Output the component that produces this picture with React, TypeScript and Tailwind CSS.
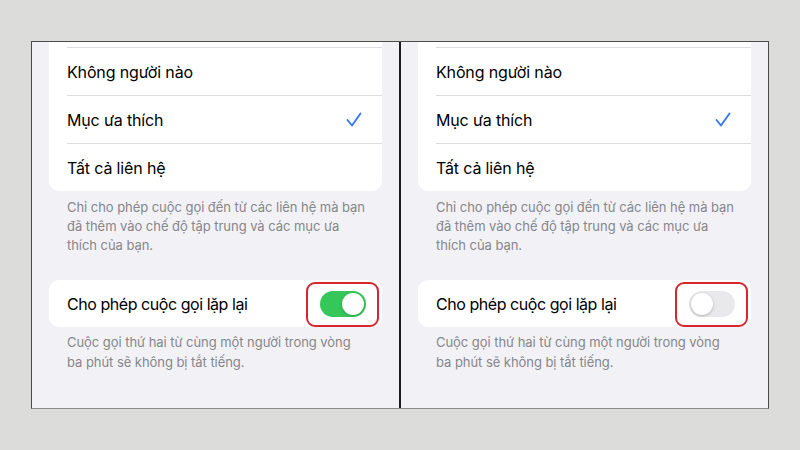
const font = { fontFamily: "Inter, 'Noto Sans', sans-serif" };

function Toggle({ on }: { on: boolean }) {
  return (
    <div className="relative">
      {/* red annotation box */}
      <div className="absolute -left-[14px] -top-[9px] w-[73px] h-[45px] rounded-[9px] border-2 border-[#d4272e]" />
      {on ? (
        <div className="w-[46px] h-[26px] rounded-full bg-[#35c759] flex items-center justify-end px-[2px]">
          <div className="w-[22px] h-[22px] rounded-full bg-white shadow-[0_1px_3px_rgba(0,0,0,0.2)]" />
        </div>
      ) : (
        <div className="w-[46px] h-[26px] rounded-full bg-[#e9e9eb] flex items-center justify-start px-[2px]">
          <div className="w-[22px] h-[22px] rounded-full bg-white shadow-[0_1px_3px_rgba(0,0,0,0.25)]" />
        </div>
      )}
    </div>
  );
}

function Tick() {
  return (
    <svg width="16" height="15" viewBox="0 0 16 15" fill="none">
      <polyline points="1.5,8 6,13.5 14.5,1.5" stroke="#3478f6" strokeWidth="1.9" strokeLinecap="round" strokeLinejoin="round" />
    </svg>
  );
}

function Panel({ on }: { on: boolean }) {
  const rows = ["Không người nào", "Mục ưa thích", "Tất cả liên hệ"];
  return (
    <div className="flex-1 h-full overflow-hidden bg-[#f2f2f6] px-[17px]" style={font}>
      {/* contacts card, top cut off by the screenshot */}
      <div className="bg-white rounded-b-[10px] pt-[5px]">
        {rows.map((r, i) => (
          <div key={r} className="pl-[18px]">
            <div className="h-[48px] border-t border-[#dcdce0] flex items-center justify-between pr-[20px]">
              <span className="text-[16px] text-black tracking-[-0.15px]">{r}</span>
              {i === 1 && <Tick />}
            </div>
          </div>
        ))}
      </div>
      <p className="mt-[7px] pl-[18px] text-[13px] leading-[19px] text-[#86868b] tracking-[-0.05px] whitespace-nowrap">
        Chỉ cho phép cuộc gọi đến từ các liên hệ mà bạn
        <br />
        đã thêm vào chế độ tập trung và các mục ưa
        <br />
        thích của bạn.
      </p>

      {/* repeated calls card */}
      <div className="mt-[25px] bg-white rounded-[10px] h-[47px] pl-[18px] pr-[16px] flex items-center justify-between">
        <span className="text-[16px] text-black tracking-[-0.45px]">Cho phép cuộc gọi lặp lại</span>
        <Toggle on={on} />
      </div>
      <p className="mt-[5px] pl-[18px] text-[13px] leading-[20px] text-[#86868b] tracking-[-0.05px] whitespace-nowrap">
        Cuộc gọi thứ hai từ cùng một người trong vòng
        <br />
        ba phút sẽ không bị tắt tiếng.
      </p>
    </div>
  );
}

export default function App() {
  return (
    <div className="w-[800px] h-[450px] bg-[#dcdcdb] pt-[41px] pl-[31px]">
      <div className="w-[738px] h-[368px] border border-[#4a4a4a] border-b-[#8a8a8a] flex">
        <Panel on={true} />
        <div className="w-[2px] h-full bg-[#1c1c1c]" />
        <Panel on={false} />
      </div>
    </div>
  );
}
